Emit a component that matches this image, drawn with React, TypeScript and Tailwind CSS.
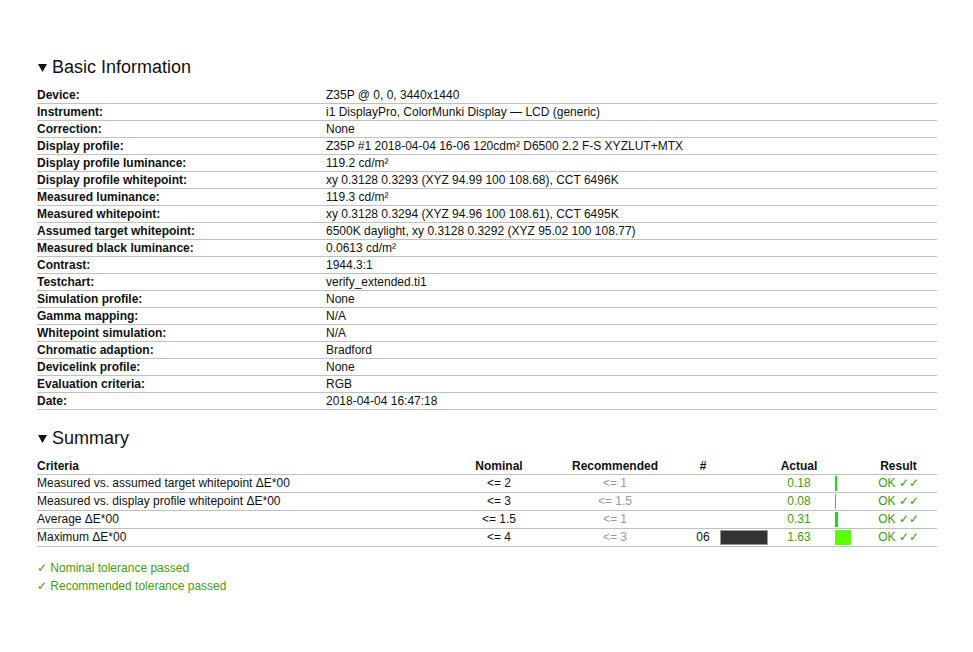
const info: [string, string][] = [
  ["Device:", "Z35P @ 0, 0, 3440x1440"],
  ["Instrument:", "i1 DisplayPro, ColorMunki Display — LCD (generic)"],
  ["Correction:", "None"],
  ["Display profile:", "Z35P #1 2018-04-04 16-06 120cdm² D6500 2.2 F-S XYZLUT+MTX"],
  ["Display profile luminance:", "119.2 cd/m²"],
  ["Display profile whitepoint:", "xy 0.3128 0.3293 (XYZ 94.99 100 108.68), CCT 6496K"],
  ["Measured luminance:", "119.3 cd/m²"],
  ["Measured whitepoint:", "xy 0.3128 0.3294 (XYZ 94.96 100 108.61), CCT 6495K"],
  ["Assumed target whitepoint:", "6500K daylight, xy 0.3128 0.3292 (XYZ 95.02 100 108.77)"],
  ["Measured black luminance:", "0.0613 cd/m²"],
  ["Contrast:", "1944.3:1"],
  ["Testchart:", "verify_extended.ti1"],
  ["Simulation profile:", "None"],
  ["Gamma mapping:", "N/A"],
  ["Whitepoint simulation:", "N/A"],
  ["Chromatic adaption:", "Bradford"],
  ["Devicelink profile:", "None"],
  ["Evaluation criteria:", "RGB"],
  ["Date:", "2018-04-04 16:47:18"],
];

interface SummaryRow {
  criteria: string;
  nominal: string;
  recommended: string;
  patch?: string;
  actual: string;
  bar: number;
  barColor: string;
}

const summary: SummaryRow[] = [
  { criteria: "Measured vs. assumed target whitepoint ΔE*00", nominal: "<= 2", recommended: "<= 1", actual: "0.18", bar: 2, barColor: "#11e011" },
  { criteria: "Measured vs. display profile whitepoint ΔE*00", nominal: "<= 3", recommended: "<= 1.5", actual: "0.08", bar: 1, barColor: "#11e011" },
  { criteria: "Average ΔE*00", nominal: "<= 1.5", recommended: "<= 1", actual: "0.31", bar: 3, barColor: "#11e011" },
  { criteria: "Maximum ΔE*00", nominal: "<= 4", recommended: "<= 3", patch: "06", actual: "1.63", bar: 16, barColor: "#5cff00" },
];

const Heading = ({ title }: { title: string }) => (
  <h2 className="flex items-center h-[21px] text-[18px] leading-[21px] text-[#111]">
    <span className="w-[15px] pl-[1px] flex items-center">
      <svg width="9" height="8" viewBox="0 0 9 8">
        <polygon points="0,0 9,0 4.5,8" fill="#111" />
      </svg>
    </span>
    {title}
  </h2>
);

export default function App() {
  return (
    <div className="w-[973px] h-[652px] bg-white font-['Liberation_Sans',Arial,sans-serif] text-[12px] text-[#111] px-[37px] pt-[57px]">
      <Heading title="Basic Information" />

      <div className="w-[900px] mt-[9px]">
        {info.map(([label, value]) => (
          <div key={label} className="flex h-[17px] border-b border-[#c0c0c0] leading-[16px]">
            <div className="w-[289px] font-bold">{label}</div>
            <div className="flex-1">{value}</div>
          </div>
        ))}
      </div>

      <div className="mt-[18px]">
        <Heading title="Summary" />
      </div>

      <div className="w-[900px] mt-[9px]">
        <div className="flex h-[17px] border-b border-[#c0c0c0] leading-[16px] font-bold">
          <div className="w-[418px]">Criteria</div>
          <div className="w-[88px] text-center">Nominal</div>
          <div className="w-[144px] text-center">Recommended</div>
          <div className="w-[32px] text-center">#</div>
          <div className="w-[50px]" />
          <div className="w-[60px] text-center">Actual</div>
          <div className="w-[31px]" />
          <div className="w-[77px] text-center">Result</div>
        </div>
        {summary.map((r) => (
          <div key={r.criteria} className="flex h-[18px] border-b border-[#c0c0c0] leading-[17px]">
            <div className="w-[418px]">{r.criteria}</div>
            <div className="w-[88px] text-center">{r.nominal}</div>
            <div className="w-[144px] text-center text-[#999]">{r.recommended}</div>
            <div className="w-[32px] text-center">{r.patch ?? ""}</div>
            <div className="w-[50px] py-[1px] pl-[1px]">
              {r.patch && <div className="w-[48px] h-full bg-[#333] border border-[#999]" />}
            </div>
            <div className="w-[60px] text-center text-[#3f9a12]">{r.actual}</div>
            <div className="w-[31px] pl-[6px] py-[1px]">
              <div className="h-full" style={{ width: r.bar, background: r.barColor }} />
            </div>
            <div className="w-[77px] text-center text-[#3f9a12]">OK ✓✓</div>
          </div>
        ))}
      </div>

      <div className="mt-[12px] text-[#4a9a0f] leading-[18px]">
        <div>✓ Nominal tolerance passed</div>
        <div>✓ Recommended tolerance passed</div>
      </div>
    </div>
  );
}
